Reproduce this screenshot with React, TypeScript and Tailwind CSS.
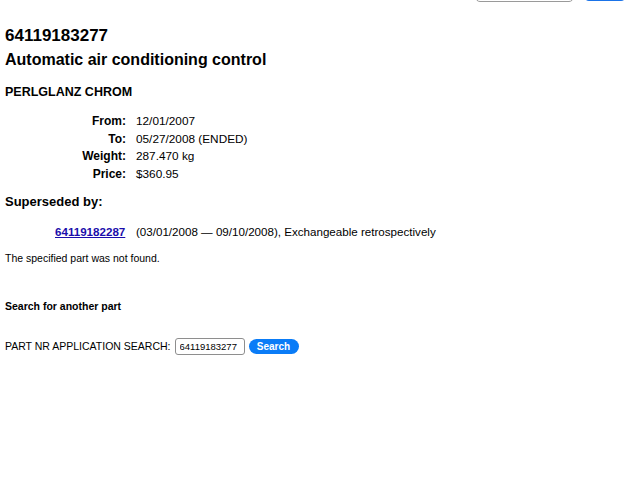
const font = { fontFamily: '"Liberation Sans", Arial, Helvetica, sans-serif' };

const details = [
  { label: 'From:', value: '12/01/2007' },
  { label: 'To:', value: '05/27/2008 (ENDED)' },
  { label: 'Weight:', value: '287.470 kg' },
  { label: 'Price:', value: '$360.95' },
];

export default function App() {
  return (
    <div className="w-[640px] h-[480px] overflow-hidden bg-white text-black" style={font}>
      {/* search bar from the header, scrolled mostly out of view */}
      <div className="flex justify-end gap-[10px] pr-[14px] -mt-[20px] h-[22px]">
        <div className="w-[99px] h-[22px] rounded-[5px] border border-[#9a9a9a] bg-white" />
        <div className="w-[42px] h-[21px] rounded-[5px] bg-[#1a73e8]" />
      </div>

      <div className="px-[5px]">
        <h1 className="mt-[24px] text-[17px] leading-[20px] font-bold">64119183277</h1>
        <h2 className="mt-[4px] text-[16px] leading-[20px] font-bold">Automatic air conditioning control</h2>
        <h3 className="mt-[14px] text-[12.5px] leading-[16px] font-bold">PERLGLANZ CHROM</h3>

        <div className="mt-[13px] flex flex-col">
          {details.map((d) => (
            <div key={d.label} className="flex items-baseline text-[12px] leading-[17.5px]">
              <span className="w-[121px] text-right font-bold">{d.label}</span>
              <span className="ml-[10px] text-[11.8px]">{d.value}</span>
            </div>
          ))}
        </div>

        <h3 className="mt-[10px] text-[13px] leading-[18px] font-bold">Superseded by:</h3>

        <div className="mt-[13px] flex items-baseline text-[11.6px] leading-[16px]">
          <a href="#" className="ml-[50px] w-[71px] font-bold text-[#1a0dab] underline">
            64119182287
          </a>
          <span className="ml-[10px]">
            (03/01/2008 — 09/10/2008), Exchangeable retrospectively
          </span>
        </div>

        <p className="mt-[11px] text-[10.5px] leading-[14px]">The specified part was not found.</p>

        <h4 className="mt-[34px] text-[10.5px] leading-[14px] font-bold">Search for another part</h4>

        <div className="mt-[25px] flex items-center text-[10.5px]">
          <span>PART NR APPLICATION SEARCH:</span>
          <input
            readOnly
            value="64119183277"
            className="ml-[4px] w-[70px] h-[17px] rounded-[3px] border border-[#8e8e8e] px-[4px] text-[9.5px] outline-none"
            style={font}
          />
          <button className="ml-[4px] w-[50px] h-[15px] rounded-full bg-[#0a7cf7] text-white text-[10px] font-bold leading-[15px]">
            Search
          </button>
        </div>
      </div>
    </div>
  );
}
